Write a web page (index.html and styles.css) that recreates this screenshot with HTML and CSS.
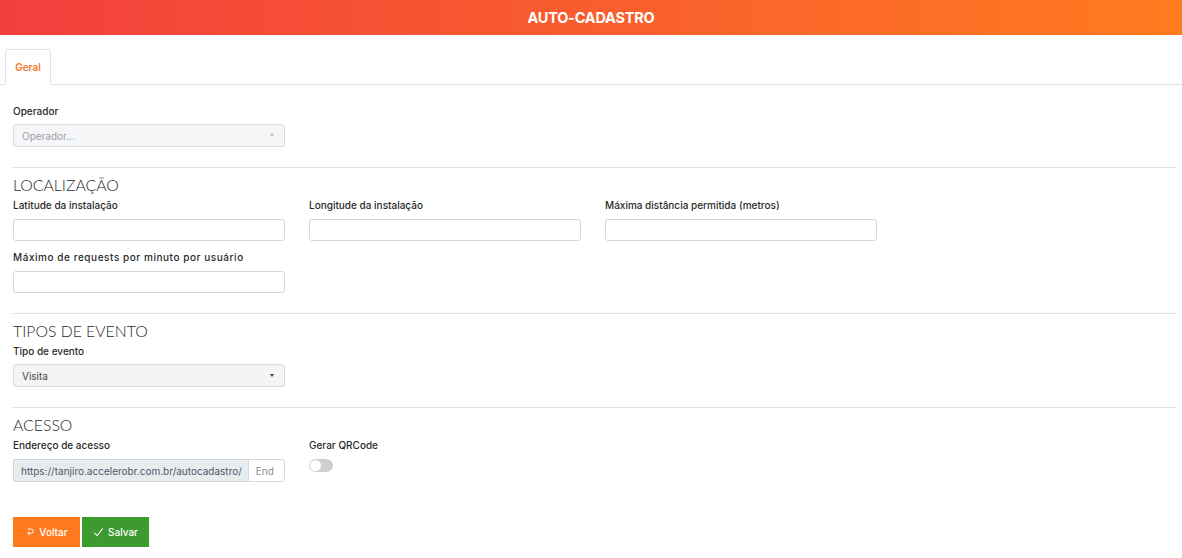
FILE: index.html
```html
<!DOCTYPE html>
<html lang="pt-BR">
<head>
<meta charset="utf-8">
<title>Auto-Cadastro</title>
<link rel="stylesheet" href="styles.css">
</head>
<body>
<header class="topbar">
  <h1 class="topbar-title">AUTO-CADASTRO</h1>
</header>

<nav class="tabs">
  <a class="tab tab-active">Geral</a>
</nav>

<main class="form">
  <div class="row">
    <div class="field">
      <label class="label label-tight">Operador</label>
      <div class="select select-placeholder">
        <span>Operador...</span>
        <span class="caret caret-light"></span>
      </div>
    </div>
  </div>

  <hr class="divider">
  <h2 class="section-title">LOCALIZAÇÃO</h2>
  <div class="row">
    <div class="field">
      <label class="label">Latitude da instalação</label>
      <input class="input" type="text">
    </div>
    <div class="field">
      <label class="label">Longitude da instalação</label>
      <input class="input" type="text">
    </div>
    <div class="field">
      <label class="label">Máxima distância permitida (metros)</label>
      <input class="input" type="text">
    </div>
  </div>
  <div class="row">
    <div class="field">
      <label class="label label-wide">Máximo de requests por minuto por usuário</label>
      <input class="input" type="text">
    </div>
  </div>

  <hr class="divider">
  <h2 class="section-title">TIPOS DE EVENTO</h2>
  <div class="row">
    <div class="field">
      <label class="label label-tight">Tipo de evento</label>
      <div class="select select-value">
        <span>Visita</span>
        <span class="caret"></span>
      </div>
    </div>
  </div>

  <hr class="divider">
  <h2 class="section-title">ACESSO</h2>
  <div class="row">
    <div class="field">
      <label class="label">Endereço de acesso</label>
      <div class="input-group">
        <span class="addon">https://tanjiro.accelerobr.com.br/autocadastro/</span>
        <input class="input input-end" type="text" placeholder="End">
      </div>
    </div>
    <div class="field">
      <label class="label">Gerar QRCode</label>
      <span class="switch"><span class="knob"></span></span>
    </div>
  </div>

  <div class="actions">
    <button class="btn btn-back" type="button">
      <svg class="btn-icon" viewBox="0 0 12 12" width="10" height="10" aria-hidden="true">
        <path d="M3 2.5h4.5a2.5 2.5 0 0 1 0 5H3.5" fill="none" stroke="currentColor" stroke-width="1.2"/>
        <path d="M5.5 5.5 3.3 7.5l2.2 2" fill="none" stroke="currentColor" stroke-width="1.2"/>
      </svg>
      Voltar
    </button>
    <button class="btn btn-save" type="button">
      <svg class="btn-icon" viewBox="0 0 12 12" width="11" height="11" aria-hidden="true">
        <path d="M1.5 6.5 4.5 9.5 10.5 1.5" fill="none" stroke="currentColor" stroke-width="1.1"/>
      </svg>
      Salvar
    </button>
  </div>
</main>
</body>
</html>
```

FILE: styles.css
```css
* { box-sizing: border-box; }

body {
  margin: 0;
  font-family: Inter, "Open Sans", "Liberation Sans", sans-serif;
  color: #2b2b2b;
  background: #fff;
}

.topbar {
  height: 35px;
  display: flex;
  align-items: center;
  justify-content: center;
  background: linear-gradient(90deg, #f23f3e 0%, #f85a2f 45%, #ff7b20 100%);
}

.topbar-title {
  margin: 0;
  color: #fff;
  font-size: 14.5px;
  font-weight: 700;
  letter-spacing: -0.2px;
}

.tabs {
  display: flex;
  padding: 14px 0 0 5px;
  border-bottom: 1px solid #dfe2e8;
}

.tab {
  display: block;
  width: 46px;
  height: 36px;
  margin-bottom: -1px;
  line-height: 34px;
  text-align: center;
  font-size: 10px;
  font-weight: 600;
  color: #f47b2b;
  background: #fff;
  border: 1px solid #dfe2e8;
  border-bottom-color: #fff;
  border-radius: 3px 3px 0 0;
}

.form {
  padding: 20px 6px 0 13px;
}

.row {
  display: flex;
  gap: 24px;
}

.row + .row { margin-top: 10px; }

.field {
  width: 272px;
  display: flex;
  flex-direction: column;
}

.label {
  font-size: 10px;
  font-weight: 500;
  color: #2a2a2a;
  line-height: 13px;
  margin-bottom: 7px;
  white-space: nowrap;
}

.label-tight { margin-bottom: 6px; }

.label-wide { letter-spacing: 0.55px; }

.select {
  height: 23px;
  display: flex;
  align-items: center;
  justify-content: space-between;
  padding: 0 8px;
  font-size: 10px;
  border: 1px solid #d8dbe0;
  border-radius: 3px;
}

.select-placeholder {
  background: #f5f6f8;
  color: #9a9ea6;
}

.select-value {
  background: #f4f4f4;
  color: #444;
}

.caret {
  width: 0;
  height: 0;
  border-left: 2.5px solid transparent;
  border-right: 2.5px solid transparent;
  border-top: 3px solid #444;
  margin-right: 2px;
}

.caret-light { border-top-color: #b5b8bd; }

.input {
  height: 22px;
  width: 100%;
  margin: 0;
  padding: 0 8px;
  font: inherit;
  font-size: 10px;
  border: 1px solid #d5d8dd;
  border-radius: 3px;
  background: #fff;
}

.divider {
  margin: 20px 0 7px;
  border: 0;
  border-top: 1px solid #dcdfe3;
}

.section-title {
  margin: 0 0 4px;
  font-family: Lato, Inter, sans-serif;
  font-size: 15.8px;
  font-weight: 300;
  color: #2a2a2a;
  line-height: 20px;
}

.input-group {
  display: flex;
  height: 23px;
}

.input-group .input { height: 23px; }

.addon {
  display: flex;
  align-items: center;
  padding: 0 6px 0 7px;
  font-size: 10px;
  color: #4a5a6a;
  background: #e9ecef;
  border: 1px solid #ced4da;
  border-right: 0;
  border-radius: 3px 0 0 3px;
  white-space: nowrap;
}

.input-end {
  flex: 1;
  min-width: 0;
  border-radius: 0 3px 3px 0;
  padding: 0 7px;
}

.input-end::placeholder { color: #8a8f96; }

.switch {
  position: relative;
  display: block;
  width: 24px;
  height: 13px;
  border-radius: 7px;
  background: #cfcfcf;
}

.knob {
  position: absolute;
  left: 1px;
  top: 1px;
  width: 11px;
  height: 11px;
  border-radius: 50%;
  background: #fff;
}

.actions {
  display: flex;
  gap: 2px;
  margin-top: 35px;
}

.btn {
  height: 30px;
  width: 67px;
  display: flex;
  align-items: center;
  justify-content: center;
  gap: 4px;
  border: 0;
  border-radius: 0;
  color: #fff;
  font: inherit;
  font-size: 10px;
  font-weight: 500;
}

.btn-back { background: #ff7a1f; }
.btn-save { background: #3d9a2e; }
```
